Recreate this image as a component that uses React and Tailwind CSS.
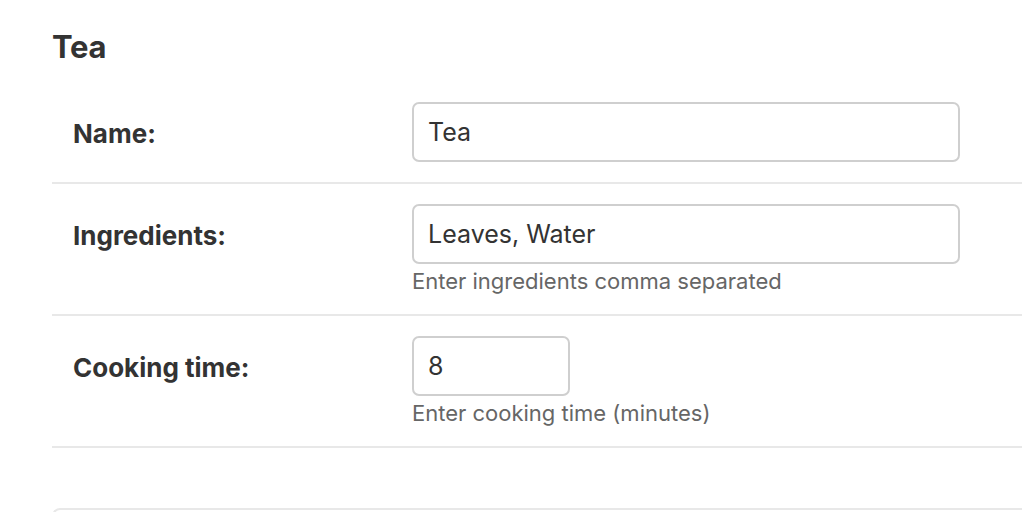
import React from 'react';

const rows = [
  { label: 'Name:', value: 'Tea', width: 'w-[548px]' },
  { label: 'Ingredients:', value: 'Leaves, Water', width: 'w-[548px]', help: 'Enter ingredients comma separated' },
  { label: 'Cooking time:', value: '8', width: 'w-[158px]', help: 'Enter cooking time (minutes)' },
];

export default function App() {
  return (
    <div className="h-[512px] overflow-hidden bg-white pl-[52px] text-[#333] font-['Inter',sans-serif]">
      <h2 className="pt-[28px] pb-[16px] text-[31px] font-bold leading-[38px] tracking-[-0.01em]">Tea</h2>

      <div>
        {rows.map((r, i) => (
          <div key={i} className="flex border-b-2 border-[#e8e8e8] px-[21px] py-[20px]">
            <label className="w-[339px] shrink-0 pt-[18px] text-[26px] font-bold leading-[28px]">{r.label}</label>
            <div>
              <input
                readOnly
                value={r.value}
                className={`${r.width} h-[60px] rounded-[7px] border-2 border-[#cfcfcf] px-[14px] text-[25px] text-[#333] outline-none`}
              />
              {r.help && <div className="mt-[4px] text-[22px] leading-[26px] text-[#666]">{r.help}</div>}
            </div>
          </div>
        ))}
      </div>

      <div className="mt-[60px] h-[40px] rounded-tl-[8px] border-l-2 border-t-2 border-[#e8e8e8]" />
    </div>
  );
}
